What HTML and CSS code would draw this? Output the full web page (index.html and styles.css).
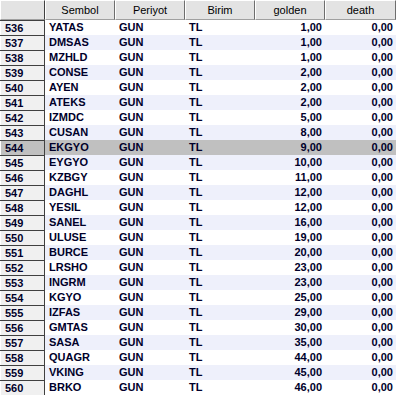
FILE: index.html
```html
<!DOCTYPE html>
<html>
<head>
<meta charset="utf-8">
<link rel="stylesheet" href="styles.css">
</head>
<body>
<table class="grid">
<colgroup>
<col class="c-num"><col class="c-w"><col class="c-w"><col class="c-w"><col class="c-w"><col class="c-last">
</colgroup>
<thead>
<tr><th class="corner"></th><th>Sembol</th><th>Periyot</th><th>Birim</th><th>golden</th><th class="last">death</th></tr>
</thead>
<tbody>
<tr><td class="num">536</td><td>YATAS</td><td>GUN</td><td>TL</td><td class="r">1,00</td><td class="r">0,00</td></tr>
<tr class="alt"><td class="num">537</td><td>DMSAS</td><td>GUN</td><td>TL</td><td class="r">1,00</td><td class="r">0,00</td></tr>
<tr><td class="num">538</td><td>MZHLD</td><td>GUN</td><td>TL</td><td class="r">1,00</td><td class="r">0,00</td></tr>
<tr class="alt"><td class="num">539</td><td>CONSE</td><td>GUN</td><td>TL</td><td class="r">2,00</td><td class="r">0,00</td></tr>
<tr><td class="num">540</td><td>AYEN</td><td>GUN</td><td>TL</td><td class="r">2,00</td><td class="r">0,00</td></tr>
<tr class="alt"><td class="num">541</td><td>ATEKS</td><td>GUN</td><td>TL</td><td class="r">2,00</td><td class="r">0,00</td></tr>
<tr><td class="num">542</td><td>IZMDC</td><td>GUN</td><td>TL</td><td class="r">5,00</td><td class="r">0,00</td></tr>
<tr class="alt"><td class="num">543</td><td>CUSAN</td><td>GUN</td><td>TL</td><td class="r">8,00</td><td class="r">0,00</td></tr>
<tr class="sel"><td class="num">544</td><td>EKGYO</td><td>GUN</td><td>TL</td><td class="r">9,00</td><td class="r">0,00</td></tr>
<tr class="alt"><td class="num">545</td><td>EYGYO</td><td>GUN</td><td>TL</td><td class="r">10,00</td><td class="r">0,00</td></tr>
<tr><td class="num">546</td><td>KZBGY</td><td>GUN</td><td>TL</td><td class="r">11,00</td><td class="r">0,00</td></tr>
<tr class="alt"><td class="num">547</td><td>DAGHL</td><td>GUN</td><td>TL</td><td class="r">12,00</td><td class="r">0,00</td></tr>
<tr><td class="num">548</td><td>YESIL</td><td>GUN</td><td>TL</td><td class="r">12,00</td><td class="r">0,00</td></tr>
<tr class="alt"><td class="num">549</td><td>SANEL</td><td>GUN</td><td>TL</td><td class="r">16,00</td><td class="r">0,00</td></tr>
<tr><td class="num">550</td><td>ULUSE</td><td>GUN</td><td>TL</td><td class="r">19,00</td><td class="r">0,00</td></tr>
<tr class="alt"><td class="num">551</td><td>BURCE</td><td>GUN</td><td>TL</td><td class="r">20,00</td><td class="r">0,00</td></tr>
<tr><td class="num">552</td><td>LRSHO</td><td>GUN</td><td>TL</td><td class="r">23,00</td><td class="r">0,00</td></tr>
<tr class="alt"><td class="num">553</td><td>INGRM</td><td>GUN</td><td>TL</td><td class="r">23,00</td><td class="r">0,00</td></tr>
<tr><td class="num">554</td><td>KGYO</td><td>GUN</td><td>TL</td><td class="r">25,00</td><td class="r">0,00</td></tr>
<tr class="alt"><td class="num">555</td><td>IZFAS</td><td>GUN</td><td>TL</td><td class="r">29,00</td><td class="r">0,00</td></tr>
<tr><td class="num">556</td><td>GMTAS</td><td>GUN</td><td>TL</td><td class="r">30,00</td><td class="r">0,00</td></tr>
<tr class="alt"><td class="num">557</td><td>SASA</td><td>GUN</td><td>TL</td><td class="r">35,00</td><td class="r">0,00</td></tr>
<tr><td class="num">558</td><td>QUAGR</td><td>GUN</td><td>TL</td><td class="r">44,00</td><td class="r">0,00</td></tr>
<tr class="alt"><td class="num">559</td><td>VKING</td><td>GUN</td><td>TL</td><td class="r">45,00</td><td class="r">0,00</td></tr>
<tr><td class="num">560</td><td>BRKO</td><td>GUN</td><td>TL</td><td class="r">46,00</td><td class="r">0,00</td></tr>
</tbody>
</table>
</body>
</html>
```

FILE: styles.css
```css
html, body {
  margin: 0;
  padding: 0;
  background: #ffffff;
  overflow: hidden;
}
.grid {
  border-collapse: separate;
  border-spacing: 0;
  table-layout: fixed;
  width: 396px;
  font-family: "Liberation Sans", Arial, sans-serif;
  font-size: 11px;
}
.c-num { width: 45px; }
.c-w { width: 70px; }
.c-last { width: 71px; }
thead th {
  height: 20px;
  padding: 0;
  box-sizing: border-box;
  background: #e3e3e3;
  border-top: 1px solid #ffffff;
  border-left: 1px solid #ffffff;
  border-right: 1px solid #6e6e6e;
  border-bottom: 1px solid #a0a0a0;
  font-weight: normal;
  color: #000000;
  text-align: center;
  vertical-align: middle;
  white-space: nowrap;
}
thead th.corner {
  border-right: 1px solid #404040;
}
tbody td {
  height: 15px;
  padding: 0 4px;
  border: 0;
  font-weight: bold;
  color: #00002a;
  white-space: nowrap;
  overflow: hidden;
  line-height: 15px;
  vertical-align: middle;
}
tbody td.r {
  text-align: right;
  padding-right: 3px;
}
tbody tr.alt td { background: #eef0fb; }
tbody tr.sel td { background: #c0c0c0; }
tbody td.num {
  background: #f0f0f0;
  box-shadow: inset 0 1px 0 #404040, inset -1px 0 0 #404040, inset 1px 0 0 #ffffff;
  padding-left: 5px;
  padding-top: 1px;
  line-height: 14px;
  height: 15px;
  box-sizing: border-box;
  color: #00002a;
}
tbody tr.alt td.num { background: #f0f0f0; }
tbody tr.sel td.num { background: #c0c0c0; }
```
